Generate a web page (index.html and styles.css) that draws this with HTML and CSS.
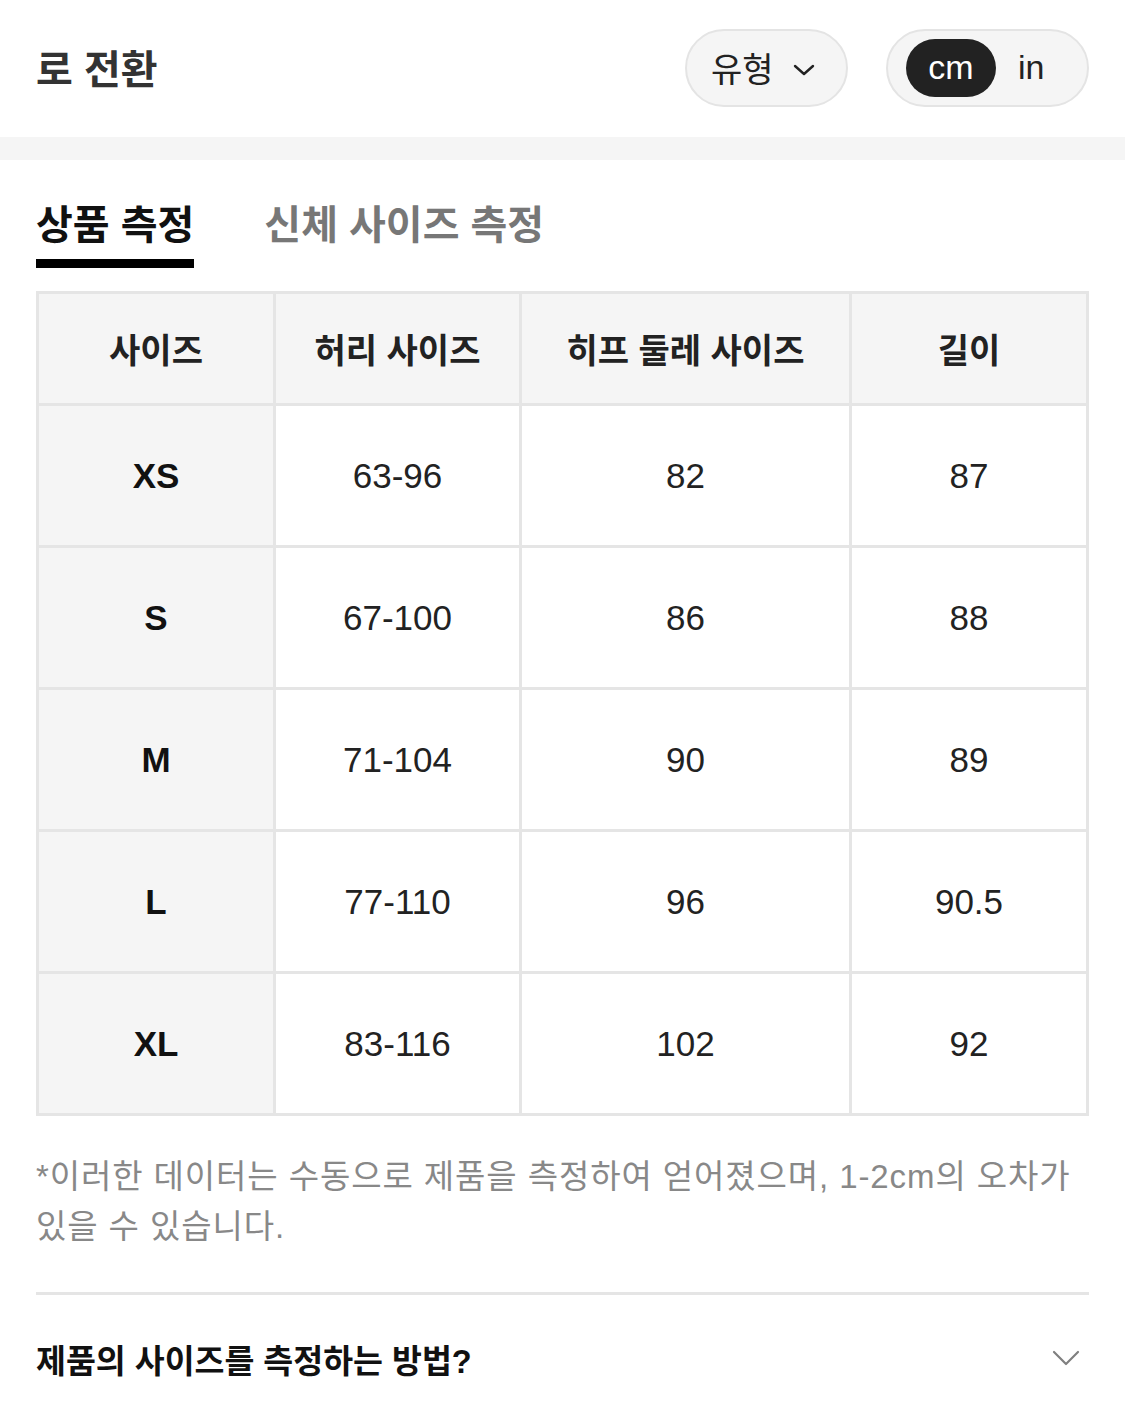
FILE: index.html
```html
<!DOCTYPE html>
<html lang="ko">
<head>
<meta charset="utf-8">
<link rel="stylesheet" href="styles.css">
</head>
<body>
<header class="top">
  <div class="title">로 전환</div>
  <div class="controls">
    <div class="pill type-pill">유형
      <svg class="chev-sm" width="24" height="14" viewBox="0 0 24 14"><path d="M3 3 L12 11 L21 3" fill="none" stroke="#222" stroke-width="2.4" stroke-linecap="round" stroke-linejoin="round"/></svg>
    </div>
    <div class="pill unit-pill">
      <span class="unit active">cm</span>
      <span class="unit">in</span>
    </div>
  </div>
</header>
<div class="band"></div>
<nav class="tabs">
  <div class="tab active">상품 측정</div>
  <div class="tab">신체 사이즈 측정</div>
</nav>
<table class="sizes">
  <colgroup>
    <col class="c1"><col class="c2"><col class="c3"><col class="c4">
  </colgroup>
  <thead>
    <tr><th>사이즈</th><th>허리 사이즈</th><th>히프 둘레 사이즈</th><th>길이</th></tr>
  </thead>
  <tbody>
    <tr><th>XS</th><td>63-96</td><td>82</td><td>87</td></tr>
    <tr><th>S</th><td>67-100</td><td>86</td><td>88</td></tr>
    <tr><th>M</th><td>71-104</td><td>90</td><td>89</td></tr>
    <tr><th>L</th><td>77-110</td><td>96</td><td>90.5</td></tr>
    <tr><th>XL</th><td>83-116</td><td>102</td><td>92</td></tr>
  </tbody>
</table>
<p class="note">*이러한 데이터는 수동으로 제품을 측정하여 얻어졌으며, 1-2cm의 오차가 있을 수 있습니다.</p>
<div class="divider"></div>
<div class="howto">
  <span>제품의 사이즈를 측정하는 방법?</span>
  <svg width="28" height="16" viewBox="0 0 28 16"><path d="M2 2 L14 14 L26 2" fill="none" stroke="#808080" stroke-width="2.2" stroke-linecap="round" stroke-linejoin="round"/></svg>
</div>
</body>
</html>
```
FILE: styles.css
```css
* { box-sizing: border-box; }
html, body { margin: 0; padding: 0; background: #fff; }
body {
  font-family: "Liberation Sans", "Noto Sans CJK KR", sans-serif;
  color: #222;
  width: 1125px;
}
.top {
  height: 137px;
  display: flex;
  align-items: center;
  justify-content: space-between;
  padding: 0 36px;
}
.title {
  font-size: 40px;
  font-weight: 700;
  color: #333;
  margin-top: -3px;
}
.controls { display: flex; gap: 38px; align-items: center; margin-top: -2px; }
.pill {
  height: 78px;
  border: 2px solid #e4e4e4;
  background: #f5f5f5;
  border-radius: 39px;
  display: flex;
  align-items: center;
}
.type-pill {
  width: 163px;
  padding-left: 24px;
  font-size: 34px;
  color: #222;
  gap: 18px;
}
.chev-sm { margin-top: 4px; }
.unit-pill {
  width: 203px;
  padding: 0 18px;
  gap: 22px;
}
.unit {
  font-size: 34px;
  color: #222;
  height: 58px;
  display: flex;
  align-items: center;
  justify-content: center;
}
.unit.active {
  background: #222;
  color: #fff;
  width: 90px;
  border-radius: 29px;
}
.band { height: 23px; background: #f5f5f5; }
.tabs {
  display: flex;
  gap: 70px;
  padding: 0 36px;
  margin-top: 37px;
}
.tab {
  font-size: 40px;
  line-height: 56px;
  font-weight: 700;
  color: #777;
  padding-bottom: 6px;
  border-bottom: 9px solid transparent;
}
.tab.active {
  color: #111;
  border-bottom-color: #000;
}
.sizes {
  margin: 23px 36px 0;
  width: 1050px;
  border-collapse: collapse;
  table-layout: fixed;
  border: 3px solid #e5e5e5;
}
.c1 { width: 237px; }
.c2 { width: 246px; }
.c3 { width: 330px; }
.c4 { width: 237px; }
.sizes th, .sizes td {
  border: 3px solid #e5e5e5;
  text-align: center;
  font-size: 35px;
  padding: 0;
}
.sizes thead th {
  height: 112px;
  background: #f5f5f5;
  font-weight: 700;
  font-size: 34px;
  color: #222;
}
.sizes tbody tr { height: 142px; }
.sizes tbody th {
  background: #f5f5f5;
  font-weight: 700;
  color: #111;
}
.sizes td { color: #222; font-weight: 400; }
.note {
  margin: 36px 36px 0;
  font-size: 33px;
  line-height: 50px;
  color: #888;
  letter-spacing: 0.9px;
  word-break: keep-all;
}
.divider {
  margin: 40px 36px 0;
  height: 3px;
  background: #e5e5e5;
}
.howto {
  margin: 0 36px;
  height: 126px;
  display: flex;
  align-items: center;
  justify-content: space-between;
  font-size: 32.5px;
  font-weight: 700;
  color: #111;
  padding-right: 9px;
}
```
